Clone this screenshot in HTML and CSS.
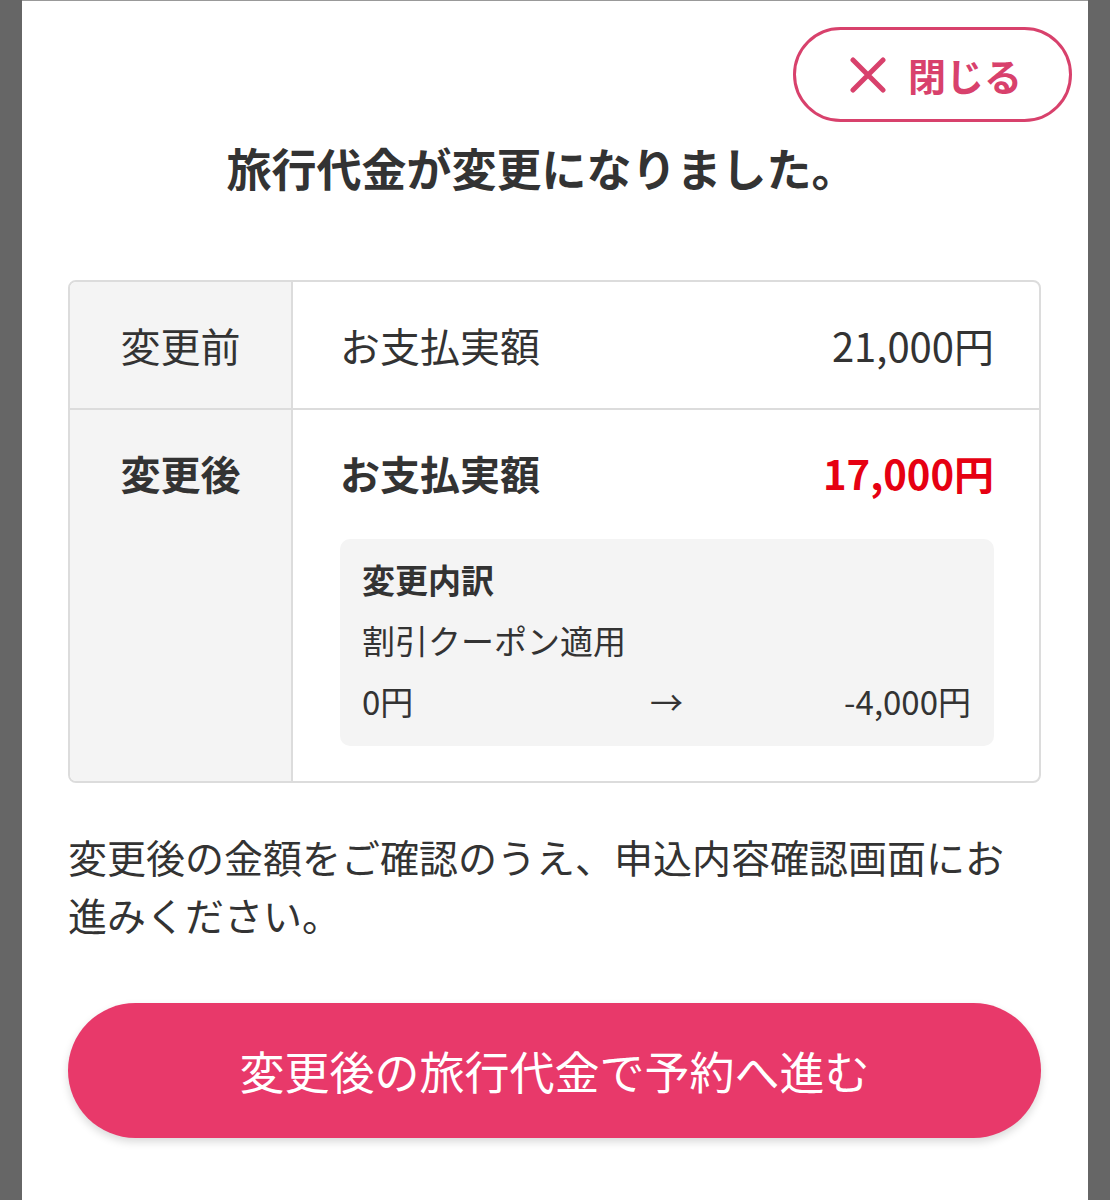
FILE: index.html
```html
<!DOCTYPE html>
<html lang="ja">
<head>
  <meta charset="UTF-8" />
  <meta name="viewport" content="width=device-width, initial-scale=1.0"/>
  <title>旅行代金の変更</title>
  <link rel="stylesheet" href="styles.css">
</head>
<body>

<div class="panel">

  <div class="kopf">
    <button class="btnSchliessen">
      <svg class="kreuz" viewBox="0 0 36 36" width="36" height="36">
        <path d="M3 3 L33 33 M33 3 L3 33" stroke="currentColor" stroke-width="5" stroke-linecap="round" fill="none"/>
      </svg>
      閉じる
    </button>
  </div>

  <div class="inhalt">
    <h1>旅行代金が変更になりました。</h1>

    <div class="tabelle">
      <div class="zeile">
        <div class="label">変更前</div>
        <div class="wert">
          <div class="betrag">
            <span>お支払実額</span>
            <span>21,000円</span>
          </div>
        </div>
      </div>
      <div class="zeile">
        <div class="label fett">変更後</div>
        <div class="wert">
          <div class="betrag fett">
            <span>お支払実額</span>
            <span class="rot">17,000円</span>
          </div>
          <div class="details">
            <div class="fett">変更内訳</div>
            <div>割引クーポン適用</div>
            <div class="verlauf">
              <span>0円</span>
              <span class="pfeil">→</span>
              <span class="rechts">-4,000円</span>
            </div>
          </div>
        </div>
      </div>
    </div>

    <p class="hinweis">変更後の金額をご確認のうえ、申込内容確認画面にお進みください。</p>

    <button class="btnWeiter">変更後の旅行代金で予約へ進む</button>
  </div>

</div>

</body>
</html>
```

FILE: styles.css
```css
:root {
  --grau: #666;
  --text: #333;
  --rahmen: #dcdcdc;
  --flaeche: #f4f4f4;
  --pink: #d8416c;
  --knopf: #e8396a;
  --rot: #e60012;
}
* {
  box-sizing: border-box;
}
body {
  margin: 0;
  background: var(--grau);
  font-family: "Noto Sans CJK JP", "Noto Sans", sans-serif;
  color: var(--text);
}
.panel {
  margin: 0 22px;
  min-height: 1200px;
  background: #fff;
  border-top: 1px solid #999;
  padding: 26px 16px 0;
}
.kopf {
  display: flex;
  justify-content: flex-end;
}
.btnSchliessen {
  display: flex;
  align-items: center;
  gap: 22px;
  width: 279px;
  height: 95px;
  padding: 0 0 0 54px;
  border: 3px solid var(--pink);
  border-radius: 48px;
  background: #fff;
  color: var(--pink);
  font-family: inherit;
  font-size: 38px;
  font-weight: bold;
  line-height: 1;
  cursor: pointer;
}
.kreuz {
  flex: none;
}
.inhalt {
  margin: 0 31px 0 30px;
}
h1 {
  margin: 16px 0 82px;
  padding-right: 26px;
  font-size: 45px;
  line-height: 60px;
  text-align: center;
}
.tabelle {
  border: 2px solid var(--rahmen);
  border-radius: 8px;
  overflow: hidden;
}
.zeile {
  display: grid;
  grid-template-columns: 223px 1fr;
}
.zeile + .zeile {
  border-top: 2px solid var(--rahmen);
}
.label {
  background: var(--flaeche);
  border-right: 2px solid var(--rahmen);
  text-align: center;
  font-size: 40px;
  line-height: 40px;
  padding: 43px 0;
}
.wert {
  padding: 43px 45px 35px 47px;
}
.zeile:first-child .wert {
  padding-bottom: 43px;
}
.betrag {
  display: flex;
  justify-content: space-between;
  font-size: 40px;
  line-height: 40px;
}
.fett {
  font-weight: bold;
}
.rot {
  color: var(--rot);
}
.details {
  margin-top: 46px;
  background: var(--flaeche);
  border-radius: 10px;
  padding: 10px 23px 14px 22px;
  font-size: 33px;
  line-height: 61px;
}
.verlauf {
  display: grid;
  grid-template-columns: 1fr auto 1fr;
}
.pfeil {
  text-align: center;
}
.rechts {
  text-align: right;
}
.hinweis {
  margin: 44px 0 60px;
  font-size: 39px;
  line-height: 58px;
}
.btnWeiter {
  display: block;
  width: 100%;
  height: 135px;
  border: none;
  border-radius: 68px;
  background: var(--knopf);
  color: #fff;
  font-family: inherit;
  font-size: 45px;
  box-shadow: 0 4px 8px rgba(0,0,0,0.15);
  cursor: pointer;
}
```
